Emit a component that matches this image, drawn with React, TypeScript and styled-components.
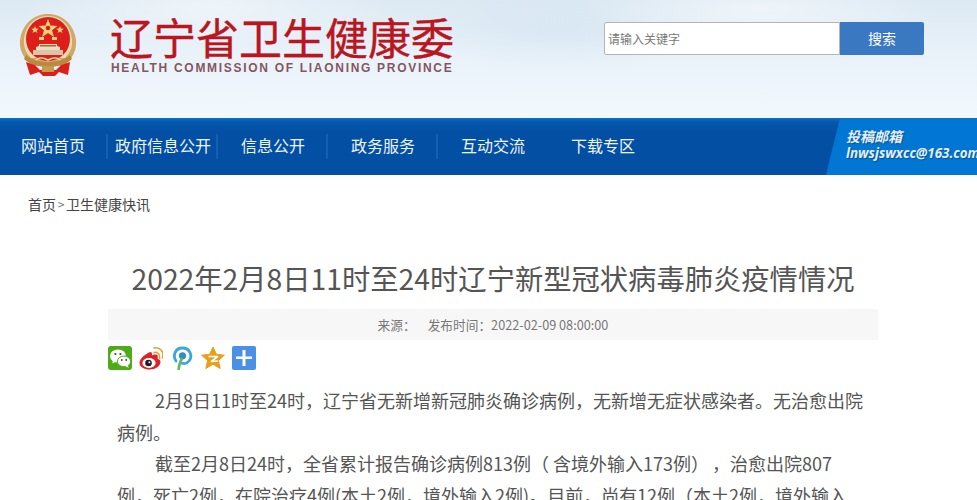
import styled, { createGlobalStyle } from "styled-components";

const GlobalStyle = createGlobalStyle`
  html, body {
    margin: 0;
    padding: 0;
    height: 500px;
    overflow: hidden;
    background: #fff;
    font-family: "Noto Sans CJK SC", "Liberation Sans", sans-serif;
  }
  * {
    box-sizing: border-box;
  }
`;

const Page = styled.div`
  width: 977px;
  height: 500px;
  overflow: hidden;
`;

const Header = styled.header`
  height: 118px;
  display: flex;
  padding: 13px 53px 0 19px;
  background:
    radial-gradient(ellipse 190px 40px at 210px 6px, rgba(255, 255, 255, 0.5), transparent),
    radial-gradient(ellipse 180px 36px at 760px 8px, rgba(255, 255, 255, 0.5), transparent),
    radial-gradient(ellipse 160px 40px at 560px 30px, rgba(205, 224, 240, 0.45), transparent),
    linear-gradient(180deg, #dce9f3 0%, #e9f2f9 45%, #f2f8fe 100%);
`;

const Emblem = styled.svg`
  width: 58px;
  height: 64px;
  flex: none;
`;

const Brand = styled.div`
  width: 345px;
  margin-left: 33px;
`;

const BrandName = styled.div`
  height: 46px;
  font-size: 43px;
  line-height: 46px;
  font-weight: 400;
  color: #b9161f;
  white-space: nowrap;
  -webkit-text-stroke: 0.4px #b9161f;
`;

const BrandEnglish = styled.div`
  margin-top: 2px;
  padding-left: 1px;
  font-family: "Liberation Sans", sans-serif;
  font-size: 12px;
  line-height: 14px;
  font-weight: 700;
  letter-spacing: 1.7px;
  color: #85565f;
  white-space: nowrap;
`;

const Search = styled.form`
  display: flex;
  height: 33px;
  margin: 9px 0 0 auto;
`;

const SearchInput = styled.input`
  width: 236px;
  height: 33px;
  padding: 0 3px;
  border: 1px solid #b5b5b5;
  border-radius: 2px 0 0 2px;
  outline: none;
  background: #fff;
  font: 12px "Noto Sans CJK SC", sans-serif;

  &::placeholder {
    color: #777;
    opacity: 1;
  }
`;

const SearchButton = styled.button`
  width: 84px;
  height: 33px;
  padding: 0 0 2px;
  border: 0;
  border-radius: 0 2px 2px 0;
  background: #3a78c2;
  color: #fff;
  font: 14px "Noto Sans CJK SC", sans-serif;
`;

const Nav = styled.nav`
  height: 57px;
  display: flex;
  align-items: center;
  background: linear-gradient(180deg, #0a6fcb 0%, #0358ac 7%, #034fa3 25%, #034fa3 100%);
`;

const NavList = styled.div`
  display: flex;
  align-items: center;
  margin-left: -2px;
`;

const NavItem = styled.a<{ $divider: boolean }>`
  width: 110px;
  height: 25px;
  padding: 0 0 3px ${(props) => (props.$divider ? "2px" : "0")};
  display: flex;
  align-items: center;
  justify-content: center;
  font-size: 16px;
  color: #eef4fb;
  white-space: nowrap;
  border-right: ${(props) => (props.$divider ? "2px solid #135fb0" : "0")};
`;

const MailTab = styled.div`
  width: 151px;
  height: 57px;
  margin-left: auto;
  padding: 9px 0 0 20px;
  background: #0177d3;
  clip-path: polygon(14px 0, 100% 0, 100% 100%, 0 100%);
  overflow: hidden;
  color: #e4eef8;
  font-style: italic;
  font-weight: 700;
  white-space: nowrap;
  text-shadow: 1px 1px 1px rgba(0, 40, 90, 0.45);
`;

const MailTitle = styled.div`
  font-size: 14px;
  line-height: 18px;
`;

const MailAddress = styled.div`
  font-family: "Open Sans", sans-serif;
  font-size: 13.4px;
  line-height: 17px;
`;

const Crumbs = styled.div`
  display: flex;
  margin: 20px 0 0 28px;
  height: 18px;
  font-size: 14px;
  line-height: 18px;
  color: #444;
`;

const CrumbArrow = styled.span`
  width: 10px;
  font-size: 12px;
  text-align: center;
  color: #777;
`;

const Article = styled.main`
  width: 770px;
  margin: 0 0 0 108px;
`;

const Title = styled.h1`
  margin: 45px -30px 0;
  height: 40px;
  font-size: 28.3px;
  line-height: 40px;
  font-weight: 400;
  text-align: center;
  white-space: nowrap;
  color: #555;
`;

const Meta = styled.div`
  height: 31px;
  margin-top: 11px;
  display: flex;
  align-items: center;
  justify-content: center;
  gap: 12px;
  background: #f7f7f7;
  font-size: 12.7px;
  color: #777;
`;

const Share = styled.div`
  display: flex;
  align-items: center;
  gap: 7px;
  height: 24px;
  margin-top: 6px;
`;

const ShareIcon = styled.svg`
  width: 24px;
  height: 24px;
  flex: none;
`;

const Body = styled.div`
  margin: 15px 0 0 9px;
  width: 752px;
  color: #555;
  font-size: 18px;
  line-height: 31.5px;
`;

const Para = styled.p`
  margin: 0;
  text-indent: 38px;
`;

const WideParen = styled.span<{ $space: number }>`
  letter-spacing: ${(props) => props.$space}px;
`;

const navItems = ["网站首页", "政府信息公开", "信息公开", "政务服务", "互动交流", "下载专区"];

function EmblemLogo() {
  return (
    <Emblem viewBox="0 0 58 64">
      <path d="M29 1C15 1 3 11 1 27c-1 9 3 18 11 24h34c8-6 12-15 11-24C55 11 43 1 29 1Z" fill="#cfa968" />
      <path d="M29 3C16 3 6 12 5 27c-.5 7 2 13 7 18h34c5-5 7.500-11 7-18C52 12 42 3 29 3Z" fill="#efdcae" />
      <circle cx="29" cy="26" r="22" fill="#dd1f1c" />
      <path d="M29 6l2.500 6.600 7 .3-5.500 4.300 2 6.800-6-3.900-6 3.900 2-6.800-5.500-4.300 7-.3Z" fill="#f2d27a" />
      <circle cx="29" cy="15" r="2.300" fill="#dd1f1c" />
      <path d="M16 13l1 2.600 2.800.1-2.200 1.700.8 2.700-2.400-1.500-2.400 1.500.8-2.700-2.200-1.700 2.800-.1Z" fill="#f2d27a" />
      <path d="M41 13l1 2.600 2.800.1-2.200 1.700.8 2.700-2.400-1.500-2.400 1.500.8-2.700-2.200-1.700 2.800-.1Z" fill="#f2d27a" />
      <rect x="20" y="24" width="5" height="3" fill="#f0c98a" />
      <rect x="33" y="24" width="5" height="3" fill="#f0c98a" />
      <path d="M17 37h24v-3l-3-1v-2H20v2l-3 1Z" fill="#eddcc0" />
      <rect x="14" y="37" width="30" height="5" fill="#d9c6aa" />
      <rect x="21" y="32" width="16" height="1.500" fill="#a9672e" />
      <path d="M7 42c6 5 14 7 22 7s16-2 22-7l2 4c-6 6-15 8-24 8s-18-2-24-8Z" fill="#b9893f" />
      <path d="M17 47c3-3 6-3 12 0 6-3 9-3 12 0" fill="none" stroke="#efdcae" strokeWidth="1.600" />
      <path d="M7 49l9 3 5 5h16l5-5 9-3-2 13-9-3-4 4H24l-4-4-9 3Z" fill="#dd1f1c" />
      <rect x="23" y="53" width="12" height="6" fill="#c79a4e" />
    </Emblem>
  );
}

function WechatIcon() {
  return (
    <ShareIcon viewBox="0 0 24 24">
      <rect width="24" height="24" rx="3" fill="#4cab16" />
      <ellipse cx="10" cy="10" rx="8" ry="6.600" fill="#fff" />
      <path d="M5 14l-.6 3.400 3.600-2Z" fill="#fff" />
      <ellipse cx="16" cy="15.400" rx="6.600" ry="5.400" fill="#fff" stroke="#4cab16" strokeWidth="1" />
      <path d="M19.600 19l1.200 2.800-3.400-1.600Z" fill="#fff" />
      <circle cx="7.400" cy="8" r="1.100" fill="#2a5a12" />
      <circle cx="12.400" cy="8" r="1.100" fill="#2a5a12" />
      <circle cx="13.800" cy="14" r="0.900" fill="#2a5a12" />
      <circle cx="18.200" cy="14" r="0.900" fill="#2a5a12" />
    </ShareIcon>
  );
}

function WeiboIcon() {
  return (
    <ShareIcon viewBox="0 0 24 24">
      <path d="M10 6.500C5 9 .5 13 .5 17c0 4 5 6.500 10 6.500 6 0 11-3.500 11-7.500 0-2.500-2.500-3-3-3.500 1-2.500 0-4-2-4-1.500 0-3 .5-3.500 1 .3-2.500-.5-4.500-3-3Z" fill="#df2029" />
      <ellipse cx="10" cy="17" rx="6.600" ry="5" fill="#fff" />
      <circle cx="9.500" cy="17" r="3.300" fill="#1c1c1c" />
      <circle cx="10.400" cy="16.200" r="1" fill="#fff" />
      <path d="M15 6.500c3-1 6.500 1.500 5.700 6" fill="none" stroke="#ee9a2f" strokeWidth="1.500" strokeLinecap="round" />
      <path d="M15 2c5.500-1.300 10.500 3.500 8.500 10" fill="none" stroke="#ee9a2f" strokeWidth="1.600" strokeLinecap="round" />
    </ShareIcon>
  );
}

function PocketIcon() {
  return (
    <ShareIcon viewBox="0 0 24 24">
      <path d="M6 15C2.500 10 5 2 12.500 2S23 10 19 15c-2 2.500-5 3-7.500 2" fill="none" stroke="#39a6dc" strokeWidth="2.800" strokeLinecap="round" />
      <circle cx="12.500" cy="9.800" r="3.600" fill="#2f8fbe" />
      <path d="M11.500 13c-1 3-2.500 5-2.800 10" fill="none" stroke="#6db46a" strokeWidth="2.800" strokeLinecap="round" />
    </ShareIcon>
  );
}

function QzoneIcon() {
  return (
    <ShareIcon viewBox="0 0 24 24">
      <path d="M12 1l3.400 7.300 8 .9-6 5.300 1.800 8L12 18.300l-7.200 4.200 1.800-8-6-5.300 8-.9Z" fill="#e8a01c" stroke="#e8a01c" strokeWidth="1" strokeLinejoin="round" />
      <path d="M7.500 10.500h9l-6 5 6.500-.5" fill="none" stroke="#fff" strokeWidth="1.700" strokeLinejoin="round" />
    </ShareIcon>
  );
}

function MoreIcon() {
  return (
    <ShareIcon viewBox="0 0 24 24">
      <rect width="24" height="24" rx="2" fill="#4a90e4" />
      <path d="M4 10.500h6.500V4h3v6.500H20v2.500h-6.500v7h-3v-7H4Z" fill="#fff" />
    </ShareIcon>
  );
}

export default function App() {
  return (
    <Page>
      <GlobalStyle />
      <Header>
        <EmblemLogo />
        <Brand>
          <BrandName>辽宁省卫生健康委</BrandName>
          <BrandEnglish>HEALTH COMMISSION OF LIAONING PROVINCE</BrandEnglish>
        </Brand>
        <Search>
          <SearchInput placeholder="请输入关键字" />
          <SearchButton type="button">搜索</SearchButton>
        </Search>
      </Header>
      <Nav>
        <NavList>
          {navItems.map((item, i) => (
            <NavItem key={item} $divider={i < 4}>
              {item}
            </NavItem>
          ))}
        </NavList>
        <MailTab>
          <MailTitle>投稿邮箱</MailTitle>
          <MailAddress>lnwsjswxcc@163.com</MailAddress>
        </MailTab>
      </Nav>
      <Crumbs>
        <span>首页</span>
        <CrumbArrow>&gt;</CrumbArrow>
        <span>卫生健康快讯</span>
      </Crumbs>
      <Article>
        <Title>2022年2月8日11时至24时辽宁新型冠状病毒肺炎疫情情况</Title>
        <Meta>
          <span>来源：</span>
          <span>发布时间：2022-02-09 08:00:00</span>
        </Meta>
        <Share>
          <WechatIcon />
          <WeiboIcon />
          <PocketIcon />
          <QzoneIcon />
          <MoreIcon />
        </Share>
        <Body>
          <Para>2月8日11时至24时，辽宁省无新增新冠肺炎确诊病例，无新增无症状感染者。无治愈出院病例。</Para>
          <Para>
            截至2月8日24时，全省累计报告确诊病例813例<WideParen $space={4}>（</WideParen>含境外输入173例
            <WideParen $space={12}>）</WideParen>，治愈出院807
            <br />
            例，死亡2例，在院治疗4例(本土2例，境外输入2例)。目前，尚有12例（本土2例，境外输入
            <br />
            10例）无症状感染者正在接受医学观察。
          </Para>
        </Body>
      </Article>
    </Page>
  );
}
